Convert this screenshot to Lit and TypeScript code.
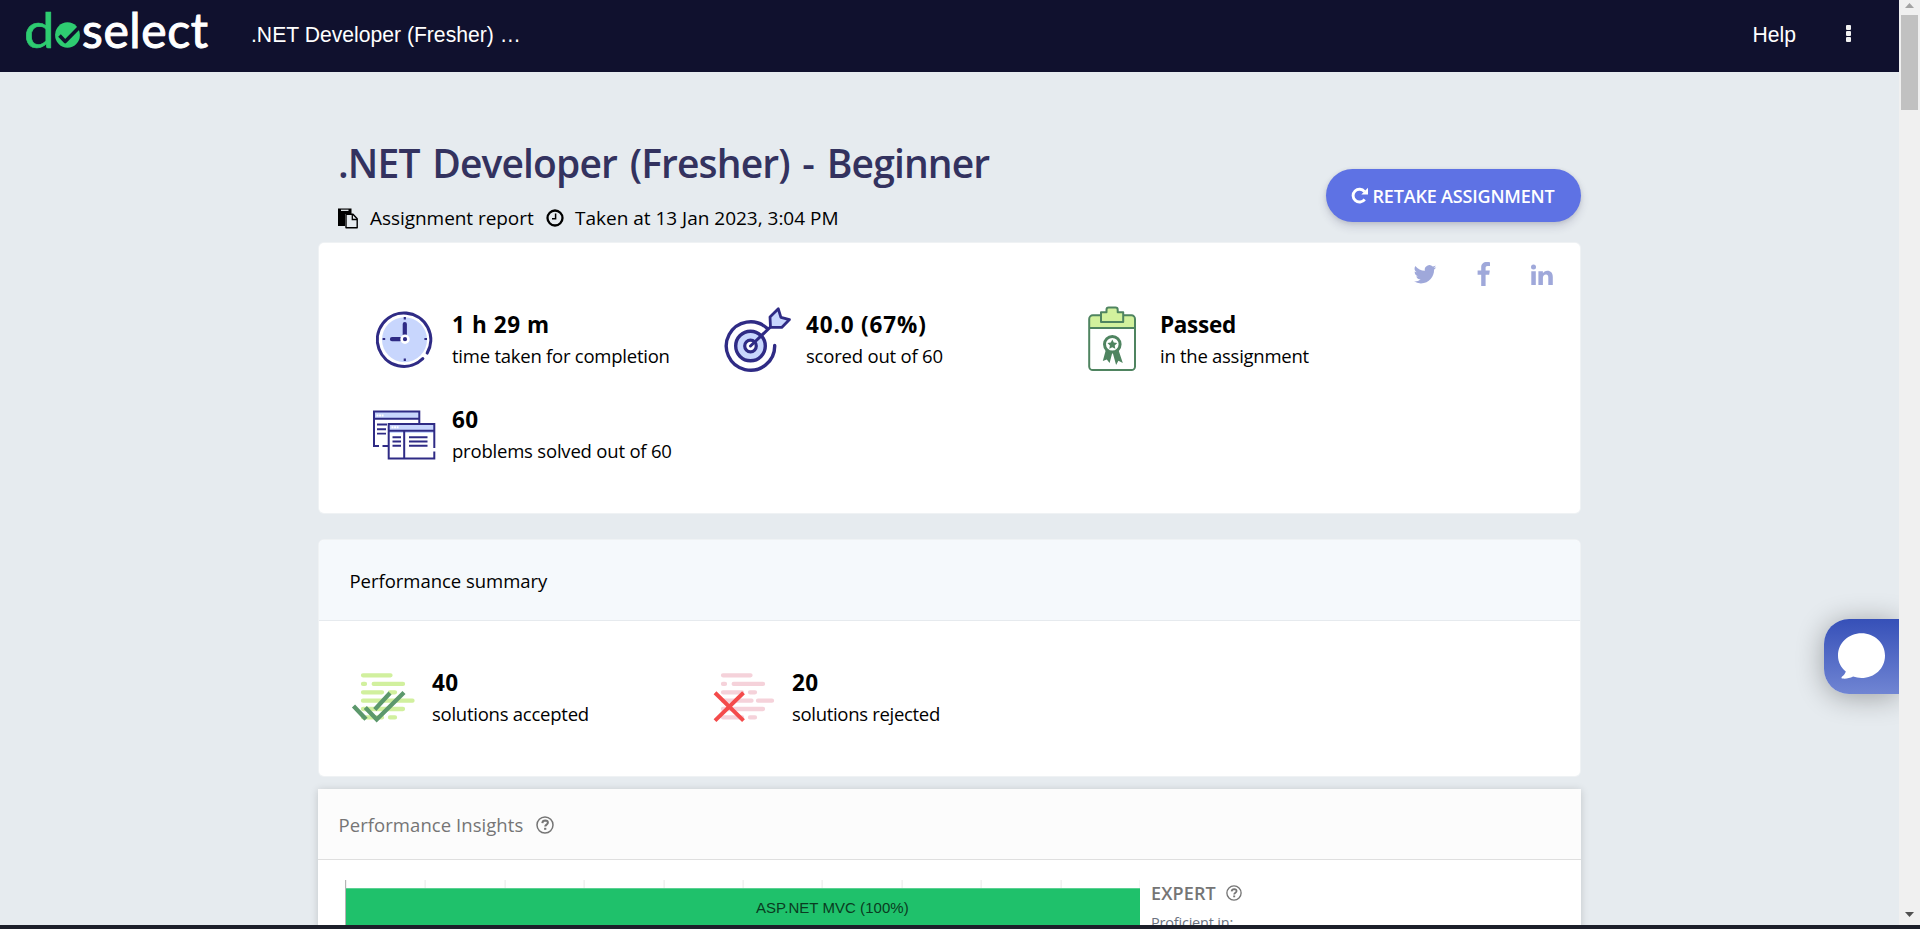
import { LitElement, html, css, svg } from "lit";
import { customElement } from "lit/decorators.js";

const NAVY = "#2f2b85";
const SKY = "#c8d6fd";
const FOREST = "#4f8460";

const clock = html`<svg viewBox="372 308 64 64" width="64" height="64">
  <circle cx="404.5" cy="339.700" r="22.5" fill=${SKY} />
  <path d="M427.200 353A26.700 26.700 0 1 0 422.800 358.700" fill="none" stroke=${NAVY} stroke-width="3.100" stroke-linecap="round" />
  <path d="M404.8 324v11M392 339.2h8" stroke=${NAVY} stroke-width="4.2" stroke-linecap="round" />
  <path d="M404.8 317v2.4M404.8 358.5v2.4M382.6 339h2.6M424.4 339h2.6" stroke=${NAVY} stroke-width="2.2" />
  <circle cx="405" cy="339.2" r="3.4" fill=${NAVY} stroke="#fff" stroke-width="2.6" />
</svg>`;

const target = html`<svg viewBox="725.500 308 66 66" width="66" height="66">
  <circle cx="751" cy="346" r="14.8" fill=${SKY} stroke=${NAVY} stroke-width="3.4" />
  <path d="M775.2 345.5A24.2 24.2 0 1 1 767.5 328.3" fill="none" stroke=${NAVY} stroke-width="3.4" stroke-linecap="round" />
  <circle cx="751" cy="346" r="5.8" fill="#fff" stroke=${NAVY} stroke-width="3.2" />
  <path d="M751 346l20.5-19.5" stroke=${NAVY} stroke-width="3" stroke-linecap="round" />
  <path d="M771 327.3l-.5-10.3 8.3-8.2 2.6 8.6 8.6 2.2-7.8 7.8z" fill=${SKY} stroke=${NAVY} stroke-width="2.8" stroke-linejoin="round" />
</svg>`;

const clipboard = html`<svg viewBox="1080 308 64 66" width="64" height="66">
  <path d="M1089.3 328v-8.600a4 4 0 0 1 4-4h37.500a4 4 0 0 1 4 4v8.600z" fill="#d2f19d" />
  <rect x="1089.2" y="315.3" width="45.800" height="54.700" rx="3.6" fill="none" stroke=${FOREST} stroke-width="2" />
  <path d="M1089 328h46" stroke=${FOREST} stroke-width="2" />
  <path d="M1101 312.300h5.500v-2.600q0-2.200 2.200-2.200h6.800q2.200 0 2.200 2.200v2.600h5.500v9.600h-22.200z" fill="#d2f19d" stroke=${FOREST} stroke-width="2" stroke-linejoin="round" />
  <path d="M1105.800 350l-3 11 4-1.500 2.800 3.500 2.900-11 3.600 13 2.300-4.200 4.400 2.200-4.300-13z" fill=${FOREST} />
  <circle cx="1112.300" cy="344.300" r="7.800" fill="#fff" stroke=${FOREST} stroke-width="3" />
  <path d="M1112.300 339.600l1.500 3 3.400.5-2.500 2.300.6 3.400-3-1.600-3 1.600.6-3.400-2.500-2.300 3.400-.5z" fill=${FOREST} />
</svg>`;

const windows = html`<svg viewBox="372 403 64 64" width="64" height="64">
  <rect x="374" y="412" width="45" height="7" fill=${SKY} />
  <path d="M379 446h-5v-34.500h45.300v11.500M374 418.700h45M382.500 446h6" fill="none" stroke=${NAVY} stroke-width="2" />
  <path d="M377 424.500h10M377 429.200h9M377 433.600h9" stroke=${NAVY} stroke-width="1.900" />
  <rect x="389" y="424" width="45" height="9" fill=${SKY} />
  <path d="M434.300 448v-24h-45.600v34.500h45.600v-7M389 430.700h45M404.200 431v27" fill="none" stroke=${NAVY} stroke-width="2" />
  <path d="M392.500 437.300h8.500M392.500 441.500h8.500M392.500 445.800h8.500M409 437.300h18.500M409 441.500h18.500M409 445.800h18.500" stroke=${NAVY} stroke-width="1.900" />
  <path d="M376.500 415.500h7M391.500 427.300h7" stroke="#fff" stroke-width="2" stroke-dasharray="1.900 .7" />
</svg>`;

const lines = (color: string, gap: boolean) => svg`<path
  d="M363 675.300H390.500M363 683.900H365M373.700 683.900H403M363 692.300H382M390 692.300H395M363 700.700H${gap ? 391.500 : 412.500}${gap ? "M398 700.700H412" : ""}M363 709H403M363 717.400H382M390 717.400H395"
  fill="none" stroke=${color} stroke-width="4.300" stroke-linecap="round" />`;

const accepted = html`<svg viewBox="352 666 64 60" width="64" height="60">
  ${lines("#d1f09e", false)}
  <path d="M353.500 706l12.500 13.300M365.300 707.500l11.400 12 27.300-27M374.800 709.500l15.200-16.500" fill="none" stroke="#5c986c" stroke-width="4.300" />
</svg>`;

const rejected = html`<svg viewBox="352 666 64 60" width="64" height="60">
  ${lines("#f5d2da", true)}
  <path d="M355 692.800l28.500 27.800M383.500 692.800l-28.500 27.800" fill="none" stroke="#f44b4b" stroke-width="4" />
</svg>`;

const question = (size: number) => html`<svg viewBox="0 0 18 18" width=${size} height=${size}>
  <circle cx="9" cy="9" r="8" fill="none" stroke="#757575" stroke-width="1.500" />
  <path d="M6.300 7.200q.3-2.600 2.900-2.600 2.700.1 2.700 2.200c0 1.800-2.700 1.900-2.700 3.800" fill="none" stroke="#757575" stroke-width="2" />
  <rect x="8.100" y="11.800" width="2.200" height="2" fill="#757575" />
</svg>`;

const stats = [
  { icon: clock, value: "1 h 29 m", label: "time taken for completion", vc: "v1", lc: "l1" },
  { icon: target, value: "40.0 (67%)", label: "scored out of 60", vc: "v2", lc: "l2" },
  { icon: clipboard, value: "Passed", label: "in the assignment", vc: "v3", lc: "l3" },
  { icon: windows, value: "60", label: "problems solved out of 60", vc: "v4", lc: "l4" },
];
const results = [
  { icon: accepted, value: "40", label: "solutions accepted", vc: "v4", lc: "l5" },
  { icon: rejected, value: "20", label: "solutions rejected", vc: "v4", lc: "l6" },
];

@customElement("app-root")
class AppRoot extends LitElement {
  static styles = css`
    :host { display: flex; flex-direction: column; height: 929px; overflow: hidden; background: #e6ebef;
      font-family: "Open Sans", "Noto Sans", sans-serif; color: #000; }
    * { box-sizing: border-box; }
    svg { display: block; overflow: visible; flex: none; }
    .window { display: flex; height: 925px; overflow: hidden; }
    .taskbar { height: 4px; background: #1c1f2a; position: relative; }
    .page { flex: 1; height: 925px; overflow: hidden; position: relative; }
    header { height: 72px; background: #10112e; color: #fff; display: flex; align-items: flex-start; padding: 0 48px 0 26px;
      font: 21.15px/26px "Liberation Sans", Arial, sans-serif; }
    .logo { display: flex; width: 225px; height: 60px; font: 400 48px/60px Lato, sans-serif; color: #fff; }
    .logo .d { width: 30px; color: #2ecc71; -webkit-text-stroke: 0.6px #2ecc71; margin-left: -2px; transform: scaleX(1.14); transform-origin: 0 0; }
    .logo svg { margin: 22px 2px 0 1px; }
    .logo .sel { -webkit-text-stroke: 1px #fff; letter-spacing: 0.6px; }
    .crumb { padding-top: 22px; flex: 1; white-space: nowrap; }
    .help { padding-top: 22px; margin-right: 50px; }
    .dots { display: flex; flex-direction: column; gap: 1px; padding-top: 25px; }
    .dots i { width: 5px; height: 5px; border-radius: 1px; background: #f2f2f2; }
    main { width: 1263px; margin-left: 318px; }
    .hero { display: flex; justify-content: space-between; height: 171px; padding: 66px 0 0 20px; }
    h1 { margin: 0; font-size: 39px; line-height: 50px; font-weight: 600; letter-spacing: -0.87px; word-spacing: 3.4px; color: #33325f; white-space: nowrap; }
    .sub { display: flex; align-items: center; height: 26px; margin-top: 17px; font-size: 19px; line-height: 26px; white-space: nowrap; }
    .sub .a { margin: 0 11px 0 12px; width: 165px; letter-spacing: -.05px; }
    .sub .b { margin-left: 11px; letter-spacing: -0.01px; }
    .retake { width: 255px; height: 53px; margin-top: 31px; border-radius: 27px; background: #5e72e4; color: #fff; display: flex; align-items: center;
      padding-left: 25px; font: 600 18px/26px "Open Sans", sans-serif; letter-spacing: -0.18px; white-space: nowrap; box-shadow: 0 5px 9px rgba(50,50,93,.16), 0 1px 4px rgba(0,0,0,.1); border: 0; }
    .retake svg { margin-right: 4.5px; }
    .card { background: #fff; border-radius: 5px; box-shadow: 0 0 0 1px rgba(255,255,255,.35); margin: 0 1px 0 1px; }
    .overview { height: 270px; position: relative; padding-top: 65px; }
    .social { position: absolute; right: 27px; top: 16px; display: flex; align-items: center; height: 30px; }
    .grid { display: grid; grid-template-columns: repeat(3, 354px); grid-auto-rows: 95px; padding-left: 53px; }
    .grid.two { grid-template-columns: repeat(2, 360px); padding: 45px 0 0 33px; }
    .stat { display: flex; }
    .pic { width: 64px; margin-right: 16px; display: flex; justify-content: center; align-items: flex-start; }
    .value { font-size: 22.5px; line-height: 32px; font-weight: 700; white-space: nowrap; padding-top: 1px; }
    .label { font-size: 18.5px; line-height: 30px; white-space: nowrap; }
    .v1 { letter-spacing: .6px; } .v2 { letter-spacing: .85px; } .v3 { letter-spacing: -.3px; } .v4 { letter-spacing: .5px; }
    .l1 { letter-spacing: -.24px; } .l2 { letter-spacing: -.2px; } .l3 { letter-spacing: -.27px; } .l4 { letter-spacing: -.2px; }
    .l5 { letter-spacing: -.25px; } .l6 { letter-spacing: -.31px; }
    .summary { height: 236px; margin-top: 27px; overflow: hidden; }
    .summary h2 { margin: 0; height: 81px; background: #f5f9fc; border-bottom: 1px solid #e6eaee; padding: 28px 0 0 30.5px;
      font-size: 18.5px; font-weight: 400; line-height: 26px; letter-spacing: -.03px; }
    .insights { margin-top: 13px; height: 200px; background: #fff; box-shadow: 0 1px 8px rgba(0,0,0,.16); }
    .insights h2 { margin: 0; height: 71px; background: #fcfcfc; border-bottom: 1px solid #dfdfdf; display: flex; align-items: flex-start;
      padding: 23px 0 0 20.5px; font-size: 18.5px; line-height: 26px; font-weight: 400; color: #757575; letter-spacing: .06px; }
    .insights h2 svg { margin: 4px 0 0 13px; }
    .body { display: flex; padding: 20px 0 0 27px; }
    .chart { width: 795px; height: 120px; padding-top: 8px; border-left: 1px solid #b5b5b5;
      background: repeating-linear-gradient(to right, transparent 0 78.4px, #e8e8e8 78.4px 79.4px) 0.6px 0; }
    .bar { height: 112px; width: 793.5px; background: #1fc16b; border-top: 1px solid #5bd192; padding: 9px 0 0 410px;
      font: 15px/20px "Liberation Sans", Arial, sans-serif; color: #0a3b21; letter-spacing: .04px; }
    .level { padding: 1px 0 0 11px; color: #757575; }
    .expert { display: flex; align-items: center; gap: 10px; font-size: 18px; line-height: 24px; font-weight: 600; height: 24px; letter-spacing: .15px; }
    .prof { font-size: 14.5px; line-height: 20px; margin-top: 8px; color: #6b7280; letter-spacing: -.2px; }
    .chat { position: absolute; left: 1824px; top: 619px; width: 75px; height: 75px; border-radius: 25px 0 0 25px;
      background: linear-gradient(#3650b8, #7085d3); box-shadow: 0 3px 28px rgba(0,0,0,.32); padding: 13px 0 0 13px; }
    .scroll { width: 21px; background: #f0f0f0; display: flex; flex-direction: column; align-items: center; justify-content: space-between; }
    .scroll .thumb { width: 17px; height: 95px; background: #c1c1c1; margin-top: 7px; }
    .scroll .top { display: flex; flex-direction: column; align-items: center; padding-top: 3px; }
    .scroll .down { margin-bottom: 8px; }
  `;

  stat(s: any) {
    return html`<div class="stat"><div class="pic">${s.icon}</div>
      <div><div class="value ${s.vc}">${s.value}</div><div class="label ${s.lc}">${s.label}</div></div></div>`;
  }

  render() {
    return html`
      <div class="window">
        <div class="page">
          <header>
            <div class="logo">
              <span class="d">d</span>
              <svg width="25" height="26" viewBox="0 0 25 26">
                <ellipse cx="12.500" cy="13" rx="12.400" ry="12.800" fill="#2ecc71" />
                <path d="M4.500 13.500l5.700 6L24.500 5" fill="none" stroke="#10112e" stroke-width="3.600" stroke-linejoin="round" />
              </svg>
              <span class="sel">select</span>
            </div>
            <div class="crumb">.NET Developer (Fresher) …</div>
            <div class="help">Help</div>
            <div class="dots"><i></i><i></i><i></i></div>
          </header>
          <main>
            <div class="hero">
              <div>
                <h1>.NET Developer (Fresher) - Beginner</h1>
                <div class="sub">
                  <svg width="20" height="21" viewBox="0 0 20 21">
                    <path d="M0 0.500H13.500V6H0zM0 5H7V18H0z" fill="#000" /><path d="M3 2.300h7.500" stroke="#e6ebef" stroke-width="1.300" />
                    <path d="M8 6.200h7l4.200 4.600v9H8z" fill="#e6ebef" stroke="#000" stroke-width="1.400" stroke-linejoin="round" />
                    <path d="M14.300 6.500v5h4.700" fill="none" stroke="#000" stroke-width="1.300" />
                  </svg>
                  <span class="a">Assignment report</span>
                  <svg width="18" height="18" viewBox="0 0 18 18">
                    <circle cx="9" cy="9" r="7.500" fill="none" stroke="#000" stroke-width="2.300" />
                    <path d="M9.600 4.500v5.200H6" fill="none" stroke="#000" stroke-width="1.500" />
                  </svg>
                  <span class="b">Taken at 13 Jan 2023, 3:04 PM</span>
                </div>
              </div>
              <button class="retake">
                <svg width="17" height="17" viewBox="0 0 17 17">
                  <path d="M13.700 12.300a6.400 6.400 0 1 1-.2-7.700" fill="none" stroke="#fff" stroke-width="2.900" />
                  <path d="M17 .8v6.700h-6.700z" fill="#fff" />
                </svg>RETAKE ASSIGNMENT
              </button>
            </div>
            <section class="card overview">
              <div class="social">
                <svg width="139" height="24" viewBox="1414 262 139 24" fill="#9fa8da">
                  <path transform="translate(1413.800 263) scale(.94)" d="M23.950 4.570a10 10 0 0 1-2.820.770 4.960 4.960 0 0 0 2.160-2.720 9.900 9.900 0 0 1-3.120 1.190 4.920 4.920 0 0 0-8.390 4.480A13.900 13.900 0 0 1 1.640 3.160a4.920 4.920 0 0 0 1.520 6.570 4.900 4.900 0 0 1-2.230-.610v.060a4.920 4.920 0 0 0 3.950 4.830 5 5 0 0 1-2.210.080 4.940 4.940 0 0 0 4.600 3.420A9.870 9.870 0 0 1 0 19.540a14 14 0 0 0 7.550 2.210c9.050 0 14-7.500 14-13.980 0-.210 0-.420-.020-.630a9.900 9.900 0 0 0 2.420-2.570z" />
                  <path d="M1490 262.300v3.800h-2.300c-1.700 0-2.100.8-2.100 2v2.500h4.200l-.6 4.200h-3.600V286h-4.400v-11.200h-3.600v-4.200h3.600v-3.100c0-3.600 2.200-5.500 5.500-5.500 1.500 0 2.900.1 3.300.3z" />
                  <path d="M1531.300 271.200h4.500V285h-4.500zM1538.400 271.200h4.500v2c.9-1.400 2.300-2.400 4.500-2.400 3.300 0 5.400 2.100 5.400 6.300v7.900h-4.500v-7.400c0-1.900-.7-3.100-2.300-3.100-1.900 0-3.100 1.300-3.100 3.300v7.200h-4.500z" />
                  <circle cx="1533.500" cy="267" r="2.500" />
                </svg>
              </div>
              <div class="grid">${stats.map((s) => this.stat(s))}</div>
            </section>
            <section class="card summary">
              <h2>Performance summary</h2>
              <div class="grid two">${results.map((s) => this.stat(s))}</div>
            </section>
            <section class="insights">
              <h2>Performance Insights ${question(18)}</h2>
              <div class="body">
                <div class="chart"><div class="bar">ASP.NET MVC (100%)</div></div>
                <div class="level">
                  <div class="expert">EXPERT ${question(16)}</div>
                  <div class="prof">Proficient in:</div>
                </div>
              </div>
            </section>
          </main>
          <div class="chat">
            <svg width="50" height="50" viewBox="0 0 50 50">
              <path d="M24.500 1.300C37.500 1.300 48 11 48 23.700S37.500 46 24.500 46c-3 0-5.800-.5-8.400-1.400-3.300 1.700-7.200 2.400-10.600 2-1.200-.2-1.400-1.400-.4-2.200 1.800-1.300 3.300-3.200 3.700-5C4 35.500 1 30 1 23.700 1 11 11.500 1.300 24.500 1.300z" fill="#fff" />
            </svg>
          </div>
        </div>
        <div class="scroll">
          <div class="top"><svg width="9" height="5" viewBox="0 0 9 5"><path d="M0 5L4.500 0 9 5z" fill="#a3a3a3" /></svg><div class="thumb"></div></div>
          <svg class="down" width="9" height="5" viewBox="0 0 9 5"><path d="M0 0h9L4.500 5z" fill="#505050" /></svg>
        </div>
      </div>
      <div class="taskbar"></div>
    `;
  }
}
